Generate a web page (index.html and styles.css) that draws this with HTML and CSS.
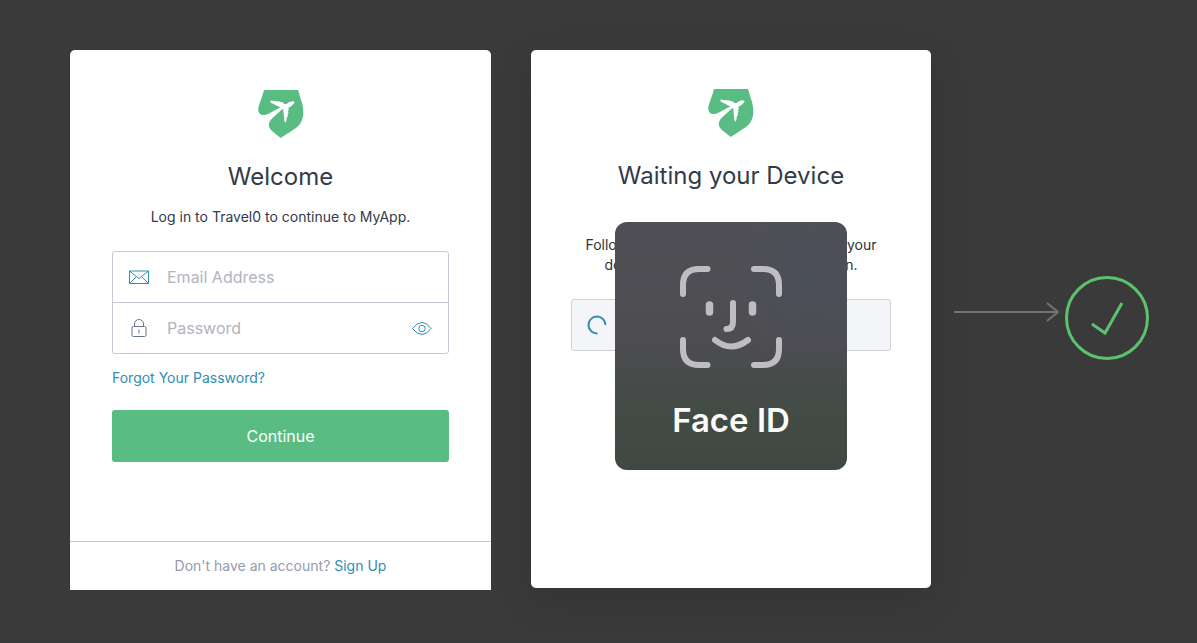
FILE: index.html
```html
<!DOCTYPE html>
<html lang="en">
<head>
<meta charset="utf-8">
<meta name="viewport" content="width=device-width, initial-scale=1">
<title>Travel0 – Log in</title>
<link rel="stylesheet" href="styles.css">
</head>
<body>
<svg class="sprite" aria-hidden="true">
  <symbol id="logo" viewBox="0 0 46 48">
    <path fill="#59bd83" d="M6 0H40L44 13C47 24 45 33 38 38L22.700 48L14 41C9.500 37 10 32.500 14 28.500L25 18.500L23 17L10.500 23.800C4 27 0 24 0.300 19C0.800 14 4 8 6 0Z"/>
    <path fill="#fff" d="M35 11.200Q37.200 11.500 36 13.500Q34.500 15.500 30.300 18L30.800 20L30 21L30.500 23L29.500 24L30 26L29 27L28.200 31.500Q27.300 33.500 26.500 31.500L25.200 19.500L22.500 17.500L12.500 12.500L12.500 10.500L17.500 11.200L18.200 10.700L19.500 11.700L21.500 11.200L22.500 12.300L24.500 12L25.500 13.500L28 14.200Q32 11 35 11.200Z"/>
  </symbol>
</svg>
<main class="page">
  <section class="card login">
    <form class="card-body">
      <svg class="logo" role="img" aria-label="Travel0"><use href="#logo"/></svg>
      <h1 class="title">Welcome</h1>
      <p class="lead">Log in to Travel0 to continue to MyApp.</p>
      <div class="fields">
        <div class="field">
          <label class="field-icon" for="email" aria-label="Email Address">
            <svg width="20" height="20" viewBox="0 0 20 20" fill="none" stroke="#318db5"><path d="M.5 4h19v12.500H.5zM.5 4L10 11.500L19.500 4M.5 16.500L7.500 9.500M19.500 16.500l-7-7"/></svg>
          </label>
          <input class="input" id="email" type="email" placeholder="Email Address">
        </div>
        <div class="field">
          <label class="field-icon" for="password" aria-label="Password">
            <svg width="20" height="20" viewBox="0 0 20 20" fill="none" stroke="#68738e"><rect x="3" y="8.500" width="14" height="10" rx="1.500"/><path d="M5.500 8.500V6a4.500 4.500 0 0 1 9 0v2.500M10 11.500v4"/></svg>
          </label>
          <input class="input" id="password" type="password" placeholder="Password">
          <button class="reveal" type="button" aria-label="Show password">
            <svg width="20" height="20" viewBox="0 0 20 20" fill="none" stroke="#318db5"><path d="M.5 10.500Q5 4.500 10 4.500T19 10.500Q15 16.500 10 16.500T.5 10.500Z"/><circle cx="10" cy="10.500" r="3.200"/></svg>
          </button>
        </div>
      </div>
      <a class="link forgot" href="#">Forgot Your Password?</a>
      <button class="submit" type="submit">Continue</button>
    </form>
    <footer class="card-footer">Don't have an account? <a class="link" href="#">Sign Up</a></footer>
  </section>

  <section class="card waiting">
    <div class="waiting-body">
      <svg class="logo" role="img" aria-label="Travel0"><use href="#logo"/></svg>
      <h2 class="title">Waiting your Device</h2>
      <p class="instructions">Follow the instructions being shown on your<br>device to complete the authentication.</p>
      <div class="status" role="status" aria-label="Waiting">
        <svg width="20" height="20" viewBox="0 0 20 20" fill="none" stroke="#318db5" stroke-width="2"><path d="M10.500 18.500A8.500 8.500 0 1 1 18.500 10"/></svg>
      </div>
    </div>
    <div class="face-id">
      <svg class="face" viewBox="0 0 104 104" fill="none" stroke="#bebec2" stroke-width="6" stroke-linecap="round" stroke-linejoin="round" aria-hidden="true">
        <path d="M4 29V20Q4 4 20 4H28.500M75 4H84Q100 4 100 20V29M4 75V84Q4 100 20 100H28.500M75 100H84Q100 100 100 84V75"/>
        <path d="M54 38V57Q54 64 47.500 64M36 75Q52 88 69 75"/>
        <path stroke-width="7.500" d="M30.500 40V47M73.500 40V47"/>
      </svg>
      <span class="face-label">Face ID</span>
    </div>
  </section>

  <div class="result">
    <svg class="arrow" viewBox="0 0 105 32" fill="none" stroke="#737373" stroke-width="2" aria-hidden="true"><path d="M0 10H104M93 1L104 10L93 19"/></svg>
    <svg class="done" viewBox="0 0 84 84" fill="none" stroke="#5cc26c" stroke-width="3" role="img" aria-label="Success"><circle cx="42" cy="42" r="40.500"/><path d="M27 48L40 57L57 27"/></svg>
  </div>
</main>
</body>
</html>
```
FILE: styles.css
```css
* {
  box-sizing: border-box;
}

body {
  margin: 0;
  min-height: 100vh;
  background: #3a3a3a;
  color: #323b49;
  font: 14px/20px Inter, "Liberation Sans", sans-serif;
}

h1, h2, p {
  margin: 0;
}

.sprite {
  position: absolute;
  width: 0;
  height: 0;
}

.page {
  display: flex;
  align-items: flex-start;
  padding: 50px 48px 40px 70px;
}

.card {
  min-width: 0;
  background: #fff;
}

.login {
  flex: 421 1 0;
  border-radius: 5px 5px 0 0;
}

.card-body {
  display: flex;
  flex-direction: column;
  padding: 40px 42px 79px;
}

.logo {
  align-self: center;
  width: 46px;
  height: 48px;
}

.title {
  margin-top: 24px;
  font-size: 24px;
  line-height: 30px;
  font-weight: 400;
  text-align: center;
}

.lead {
  margin-top: 15px;
  text-align: center;
}

.fields {
  margin-top: 24px;
  border: 1px solid #c6cad8;
  border-radius: 3px;
}

.field {
  display: flex;
  align-items: center;
  height: 50px;
  padding: 0 16px;
}

.field + .field {
  height: 51px;
  border-top: 1px solid #c6cad8;
}

.field-icon,
.reveal {
  display: flex;
  flex: none;
}

.reveal {
  padding: 0;
  border: 0;
  background: none;
  cursor: pointer;
}

.input {
  flex: 1;
  min-width: 0;
  padding: 0 0 0 18px;
  border: 0;
  outline: 0;
  background: none;
  color: inherit;
  font: 16px/24px Inter, "Liberation Sans", sans-serif;
}

.input::placeholder {
  color: #b1b4be;
  opacity: 1;
}

.link {
  color: #318db5;
  text-decoration: none;
}

.forgot {
  align-self: flex-start;
  margin-top: 14px;
}

.submit {
  height: 52px;
  margin-top: 22px;
  border: 0;
  border-radius: 3px;
  background: #59bd83;
  color: #fff;
  font: 16px/24px Inter, "Liberation Sans", sans-serif;
  cursor: pointer;
}

.card-footer {
  padding: 14px;
  border-top: 1px solid #c6cad3;
  color: #949bab;
  text-align: center;
}

.waiting {
  position: relative;
  flex: 400 1 0;
  margin-left: 40px;
  border-radius: 5px;
  box-shadow: 0 12px 40px rgba(0, 0, 0, 0.12);
}

.waiting-body {
  display: flex;
  flex-direction: column;
  padding: 39px 40px 237px;
}

.instructions {
  margin-top: 44px;
  color: #2c323b;
  text-align: center;
}

.status {
  display: flex;
  align-items: center;
  height: 52px;
  margin-top: 24px;
  padding: 0 15px;
  border: 1px solid #cfd0da;
  border-radius: 3px;
  background: #f4f5f7;
}

.face-id {
  position: absolute;
  top: 172px;
  left: 50%;
  display: flex;
  flex-direction: column;
  align-items: center;
  width: 232px;
  padding: 43px 20px 30px;
  border-radius: 12px;
  background:
    radial-gradient(circle at 86% 22%, rgba(70, 82, 98, 0.4), transparent 32%),
    linear-gradient(#504f55 0%, #4e4d52 48%, #474b4a 64%, #414b44 80%, #404842 100%);
  transform: translateX(-50%);
}

.face {
  width: 104px;
  height: 104px;
}

.face-label {
  margin-top: 31px;
  color: #fafafa;
  font-size: 33px;
  font-weight: 600;
  line-height: 40px;
  white-space: nowrap;
}

.result {
  display: flex;
  flex: 195 1 0;
  align-items: center;
  gap: 6px;
  min-width: 0;
  margin-left: 23px;
  padding-top: 226px;
}

.arrow {
  flex: 1;
  min-width: 0;
}

.done {
  flex: none;
  width: 84px;
  height: 84px;
}
```
